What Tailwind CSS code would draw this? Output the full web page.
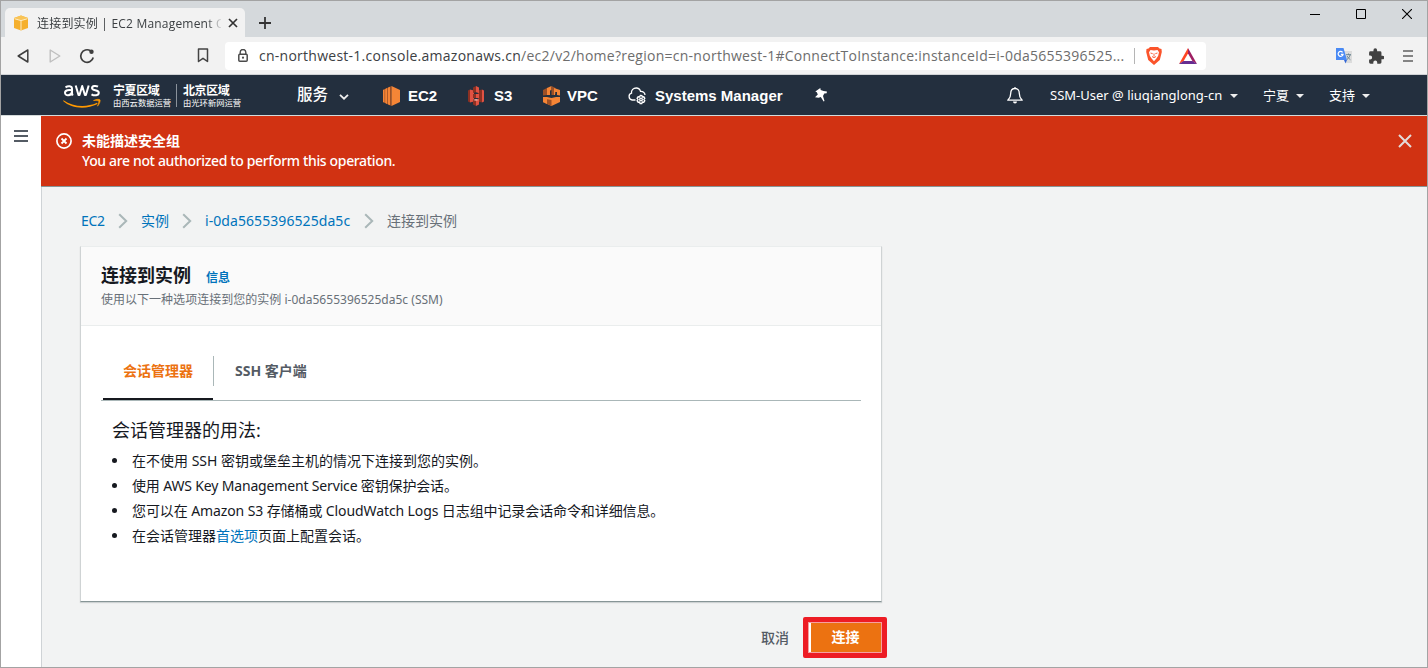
<!DOCTYPE html>
<html lang="zh-CN">
<head>
<meta charset="utf-8">
<title>连接到实例 | EC2 Management Console</title>
<script src="https://cdn.jsdelivr.net/npm/@tailwindcss/browser@4"></script>
</head>
<body class="w-[1428px] h-[668px] overflow-hidden whitespace-nowrap bg-[#f2f3f3] font-['Noto_Sans','Noto_Sans_CJK_SC',sans-serif] text-[14px]">
<div class="flex h-[668px] w-[1428px] flex-col border border-[#a3a3a3]">

  <!-- tab strip -->
  <div class="flex h-9 shrink-0 bg-[#d5d9dc] pl-1 pt-[7px] text-[#3c4043]">
    <div class="flex h-[29px] w-[240px] shrink-0 items-center rounded-t-[5px] bg-[#f2f2f2] pl-2">
      <svg class="size-4 shrink-0" viewBox="0 0 16 16"><path d="M1 3 8 .5 15 3v10l-7 2.500L1 13z" fill="#f5b02e"/><path d="M1 3 8 .5 15 3 8 5.200z" fill="#f9c456"/><path d="M1.500 3.700 8 5.600l6.500-1.900M8 5.600V15" stroke="#fff3d5" stroke-width=".9" fill="none"/></svg>
      <span class="ml-2 mt-[2px] w-[184px] shrink-0 overflow-hidden font-['Open_Sans','Noto_Sans_CJK_SC',sans-serif] text-[12px] leading-5 tracking-[0.2px] [mask-image:linear-gradient(to_right,black_170px,transparent_186px)]">连接到实例 | EC2 Management C</span>
      <svg class="ml-[7px] size-[10px] shrink-0" viewBox="0 0 10 10"><path d="m1 1 8 8m0-8-8 8" stroke="#333" stroke-width="1.700"/></svg>
    </div>
    <svg class="ml-[14px] mt-[9px] size-3 shrink-0" viewBox="0 0 12 12"><path d="M6 0v12M0 6h12" stroke="#333" stroke-width="1.800"/></svg>
    <div class="ml-auto mt-[1px] flex pr-[15px]">
      <svg class="h-[11px] w-[10px]" viewBox="0 0 10 11"><path d="M0 5.500h10" stroke="#000"/></svg>
      <svg class="ml-9 h-[10px] w-[10px]" viewBox="0 0 10 10"><path d="M.5.5h9v9h-9z" fill="none" stroke="#000"/></svg>
      <svg class="ml-9 h-[10px] w-[10px]" viewBox="0 0 10 10"><path d="m0 0 10 10M10 0 0 10" stroke="#000" stroke-width="1.100"/></svg>
    </div>
  </div>

  <!-- address bar -->
  <div class="flex h-[38px] shrink-0 items-center border-b border-[#d0d2d5] bg-[#f2f2f2] pl-4">
    <svg class="h-[14px] w-3" viewBox="0 0 12 14"><path d="M10.800 1v12L1.200 7z" fill="none" stroke="#3f3f3f" stroke-width="1.500" stroke-linejoin="round"/></svg>
    <svg class="ml-5 h-[14px] w-3" viewBox="0 0 12 14"><path d="M1.200 1v12l9.600-6z" fill="none" stroke="#bfbfbf" stroke-width="1.400" stroke-linejoin="round"/></svg>
    <svg class="ml-[18px] size-4" viewBox="0 0 16 16"><path d="M14.200 9.500A6.300 6.300 0 1 1 11.500 2.800" fill="none" stroke="#3f3f3f" stroke-width="1.700"/><circle cx="12.500" cy="3.800" r="2.200" fill="#3f3f3f"/></svg>
    <svg class="ml-[102px] h-[15px] w-3" viewBox="0 0 12 15"><path d="M1.500 1h9v12.500L6 10.300l-4.500 3.200z" fill="none" stroke="#444" stroke-width="1.500" stroke-linejoin="round"/></svg>
    <div class="ml-4 flex h-7 w-[981px] shrink-0 items-center rounded bg-white pl-[13px]">
      <svg class="h-[13px] w-[10px] shrink-0" viewBox="0 0 10 13"><path d="M2.200 5V3.300a2.800 2.800 0 0 1 5.600 0V5" fill="none" stroke="#4b4b4b" stroke-width="1.400"/><rect x=".8" y="5.200" width="8.400" height="7" rx="1" fill="none" stroke="#4b4b4b" stroke-width="1.500"/><circle cx="5" cy="8.700" r="1.100" fill="#4b4b4b"/></svg>
      <span class="ml-[11px] w-[875px] shrink-0 font-['Open_Sans',sans-serif] text-[14px] leading-5 tracking-[0.26px] text-[#6d6d6d]"><span class="text-[#3c4043]">cn-northwest-1.console.amazonaws.cn</span>/ec2/v2/home?region=cn-northwest-1#ConnectToInstance:instanceId=i-0da5655396525...</span>
      <span class="h-4 w-px bg-[#b5b5b5]"></span>
      <svg class="ml-[11px] h-[18px] w-4 shrink-0" viewBox="0 0 16 18"><path d="M4 0h8l1.500 1.500L15.500 2l.3 3-2 8L8 18l-5.800-5L.2 5l.3-3 2-.5z" fill="#fb542b"/><path d="M4.500 3 8 3.500l3.500-.5L13 5.300l-.8 3.500-1.800 2.700L8 14.200l-2.400-2.700-1.800-2.700L3 5.300z" fill="#fff"/><path d="m4.500 6 2.200.7M11.500 6l-2.200.7M8 6.500v3M6 9.500l2 1.200 2-1.200" stroke="#fb542b" stroke-width=".9" fill="none"/></svg>
      <svg class="ml-[17px] h-4 w-[18px] shrink-0" viewBox="0 0 18 16"><path d="M9 0 0 16l4.500-2.800L9 5.500z" fill="#ff4724"/><path d="m9 0 9 16-4.500-2.800L9 5.500z" fill="#9e1f63"/><path d="M0 16h18l-4.500-3h-9z" fill="#662d91"/></svg>
    </div>
    <svg class="ml-[130px] h-[17px] w-4 shrink-0" viewBox="0 0 16 17"><path d="M7 4h9v12H10z" fill="#dcdcdc"/><path d="M0 1h7.500L11 13H0z" fill="#4a8af4"/><path d="M8 13h3l-1.500 3.500z" fill="#3367d6"/><path d="M6.600 5.300a2.500 2.500 0 1 0 .5 2H4.900" fill="none" stroke="#fff" stroke-width="1.200"/><path d="M10 7.700h5M12.500 6.500v1.200m1.700 0c-.4 2-2 4-3.200 4.800m0-3.500c.8 1.500 2 2.700 3.400 3.700" fill="none" stroke="#607d8b" stroke-width=".9"/></svg>
    <svg class="ml-4 h-4 w-4 shrink-0" viewBox="0 0 22 22"><path d="M20 10.500h-1.500v-4a2 2 0 0 0-2-2h-4V3a2.500 2.500 0 0 0-5 0v1.500h-4a2 2 0 0 0-2 2v3.800H3a2.700 2.700 0 0 1 0 5.400H1.500v3.800a2 2 0 0 0 2 2h3.800V20a2.700 2.700 0 0 1 5.400 0v1.500h3.800a2 2 0 0 0 2-2v-4H20a2.500 2.500 0 0 0 0-5z" fill="#424242"/></svg>
    <svg class="ml-[19px] h-3 w-[10px] shrink-0" viewBox="0 0 10 12"><path d="M0 1h10M0 6h10M0 11h10" stroke="#606060" stroke-width="1.700"/></svg>
  </div>

  <!-- console navigation -->
  <div class="flex h-[41px] shrink-0 items-center border-b border-[#d5dbdb] bg-[#232f3e] pl-[62px] pt-[2px] text-white">
    <svg class="-mt-px h-6 w-[38px] shrink-0" viewBox="0 0 38 24"><g fill="none" stroke="#fff" stroke-width="2"><path d="M2.500 3.300C5 1.700 9 1.700 9 4.800v4c0 1.200.3 2 .8 2.700M9 6.300C6 5.500 2 6 2 8.800c0 3.600 6.500 3 7-.8"/><path d="m12.700 1.500 2.800 9.500h1L19.200 2l2.700 9h1l2.800-9.500" stroke-linejoin="round"/><path d="M35 2.700c-2-1.200-6-1-6 1.400 0 3 6.800 1.400 6.800 4.600 0 3-4.500 3.300-7.300 1.600"/></g><path d="M.5 16.200c9 6.600 23 7.600 33.500 2.600l.6 1.200c-11.500 5.800-26 4.800-34.500-3z" fill="#f90"/><path d="M30.500 16.500c3-1.600 6-1.300 6.500-.7.600.8-.4 4.200-2.500 6.400 1-2.600 1.600-4.600 1.200-5.100-.5-.6-2.500-.6-5.200-.6z" fill="#f90" stroke="#f90" stroke-width=".6"/></svg>
    <div class="ml-3 w-[63px] shrink-0 font-['Noto_Sans_CJK_SC',sans-serif]">
      <div class="text-[12px] font-bold leading-[13px] tracking-[-0.4px]">宁夏区域</div>
      <div class="text-[8.3px] leading-[13px]">由西云数据运营</div>
    </div>
    <span class="-mt-px h-[23px] w-px shrink-0 bg-[#8a929b]"></span>
    <div class="ml-[6px] w-[114px] shrink-0 font-['Noto_Sans_CJK_SC',sans-serif]">
      <div class="text-[12px] font-bold leading-[13px] tracking-[-0.4px]">北京区域</div>
      <div class="text-[8.3px] leading-[13px]">由光环新网运营</div>
    </div>
    <span class="-mt-[2px] w-[42px] shrink-0 text-[15.500px] font-medium">服务</span>
    <svg class="mt-[1px] h-[6px] w-[10px] shrink-0" viewBox="0 0 10 6"><path d="m1 .8 4 3.900L9 .8" fill="none" stroke="#eee" stroke-width="1.800"/></svg>
    <svg class="ml-[34px] h-5 w-[17px] shrink-0" viewBox="0 0 17 20"><path d="M0 4v12l8.500 4V0z" fill="#9d5025"/><path d="M0 4 1.500 3.300v13.400L0 16zM2.200 3l1.800-.9v15.800l-1.800-.9zM4.800 1.700 7 .7v18.600l-2.200-1z" fill="#f58536"/><path d="m8.500 0 8.500 4v12l-8.500 4z" fill="#f58536"/></svg>
    <span class="ml-2 w-[60px] shrink-0 font-['Liberation_Sans'] text-[15px] font-bold">EC2</span>
    <svg class="h-5 w-4 shrink-0" viewBox="0 0 16 20"><path d="M0 4.500 2 3.500v13l-2-1z" fill="#8c3123"/><path d="m14 3.500 2 1v11l-2 1z" fill="#e05243"/><path d="m2 3.500 4 1v11l-4 1z" fill="#e05243"/><path d="m14 3.500-4 1v11l4 1z" fill="#8c3123"/><path d="M8 0 5 1.500V7l3-.7zM5 13v5.500L8 20v-6.300z" fill="#8c3123"/><path d="m8 0 3 1.500V7l-3-.7zM11 13v5.500L8 20v-6.300z" fill="#e05243"/><path d="M5 8h3v4H5z" fill="#8c3123"/><path d="M8 8h3v4H8z" fill="#e05243"/><path d="m5 14 3-1 3 1-3 .7z" fill="#f2b0a9"/></svg>
    <span class="ml-[10px] w-[49px] shrink-0 font-['Liberation_Sans'] text-[15px] font-bold">S3</span>
    <svg class="h-5 w-[17px] shrink-0" viewBox="0 0 17 20"><path d="m0 4 4-2v7l-4 .5z" fill="#9d5025"/><path d="m4 2 4.500-2v4L7 4.500V9H4z" fill="#f58536"/><path d="m8.500 0 4 2v6L11 9H8.500z" fill="#9d5025"/><path d="m11 2 6 2v5.500L14 9V6h-2v3h-1z" fill="#f58536"/><path d="M0 11h4l4.500 1 4.500-1h4v5l-8.500 4L0 16z" fill="#f58536"/><path d="M0 12.500 8.500 14v6L0 16z" fill="#9d5025"/><path d="M0 12h4v6l-4-2z" fill="#f58536"/></svg>
    <span class="ml-[7px] w-[61px] shrink-0 font-['Liberation_Sans'] text-[15px] font-bold">VPC</span>
    <svg class="h-[18px] w-[18px] shrink-0" viewBox="0 0 18 18" fill="none" stroke="#fff" stroke-width="1.300"><path d="M7.500 13H4.200a3.500 3.500 0 0 1-.7-6.800C3 3 5.500 1 8.200 1c2.300 0 3.800 1.300 4.300 3.300 2.300-.2 4.500 1.400 4.500 3.700"/><path d="m12.300 8.500 1.600.1.500 1.400 1.400-.2 1 1.500-.9 1.200.9 1.300-1 1.400-1.400-.2-.6 1.500h-1.700l-.6-1.500-1.400.2-1-1.400.9-1.300-.9-1.200 1-1.500 1.400.2z"/><circle cx="13" cy="12.500" r="1.300"/></svg>
    <span class="ml-[9px] w-[160px] shrink-0 font-['Liberation_Sans'] text-[15px] font-bold">Systems Manager</span>
    <svg class="-mt-[2px] h-[14px] w-3 shrink-0" viewBox="0 0 12 14"><path d="M5.300 0 .3 3.400l1.500.8 1 2.300L0 9.300l3.600.5L5.800 9l2.800 4.500.9-.6L8 8l1.300-2.500 2.400-.3.200-1.700L8.500 3 5.700 2z" fill="#fff"/></svg>
    <svg class="-mt-[2px] ml-[180px] h-[18px] w-4 shrink-0" viewBox="0 0 16 18"><path d="M8 1v1.500m0 0c-3 0-4.300 2.200-4.300 5 0 4-1 4.700-2.900 6.700h14.400c-1.900-2-2.900-2.700-2.900-6.700 0-2.800-1.300-5-4.300-5z" fill="none" stroke="#fff" stroke-width="1.300" stroke-linejoin="round"/><path d="M6 15.500h4a2 2 0 0 1-4 0z" fill="#fff"/></svg>
    <span class="ml-[27px] w-[180px] shrink-0 text-[13px]">SSM-User @ liuqianglong-cn</span>
    <svg class="h-1 w-2 shrink-0" viewBox="0 0 8 4"><path d="M0 0h8L4 4z" fill="#eee"/></svg>
    <span class="ml-[25px] w-[33px] shrink-0 text-[13px]">宁夏</span>
    <svg class="h-1 w-2 shrink-0" viewBox="0 0 8 4"><path d="M0 0h8L4 4z" fill="#eee"/></svg>
    <span class="ml-[25px] w-[33px] shrink-0 text-[13px]">支持</span>
    <svg class="h-1 w-2 shrink-0" viewBox="0 0 8 4"><path d="M0 0h8L4 4z" fill="#eee"/></svg>
  </div>

  <div class="flex min-h-0 flex-1">
    <aside class="w-10 shrink-0 bg-white pl-[13px] pt-[14px]">
      <svg class="h-3 w-[14px]" viewBox="0 0 14 12"><path d="M0 1h14M0 6h14M0 11h14" stroke="#545b64" stroke-width="2"/></svg>
    </aside>
    <main class="min-w-0 flex-1 border-l border-[#cfd3d6] bg-[#f2f3f3]">
      <div class="-ml-px flex h-[71px] items-start border-b border-[#879596] bg-[#d13212] text-white">
        <svg class="ml-[15px] mt-[17px] size-4 shrink-0" viewBox="0 0 16 16" fill="none" stroke="#fff"><circle cx="8" cy="8" r="7.100" stroke-width="1.700"/><path d="m5.500 5.500 5 5m0-5-5 5" stroke-width="1.800"/></svg>
        <div class="ml-[10px] mt-[15px] text-[14px] leading-5">
          <div class="font-bold">未能描述安全组</div>
          <div class="font-medium tracking-[-0.35px]">You are not authorized to perform this operation.</div>
        </div>
        <svg class="ml-auto mr-[15px] mt-[18px] size-[14px] shrink-0" viewBox="0 0 14 14"><path d="m1 1 12 12m0-12L1 13" stroke="#e3dcda" stroke-width="2"/></svg>
      </div>

      <nav class="ml-[39px] mt-6 flex h-5 items-center text-[14px] leading-5 text-[#0073bb]">
        <span class="w-[37px] tracking-[-0.3px]">EC2</span>
        <svg class="h-4 w-[10px]" viewBox="0 0 10 16"><path d="m1.200 1.200 7 6.800-7 6.800" fill="none" stroke="#aab7b8" stroke-width="2"/></svg>
        <span class="ml-[13px] w-[41px]">实例</span>
        <svg class="h-4 w-[10px]" viewBox="0 0 10 16"><path d="m1.200 1.200 7 6.800-7 6.800" fill="none" stroke="#aab7b8" stroke-width="2"/></svg>
        <span class="ml-[13px] w-[159px] tracking-[0.070px]">i-0da5655396525da5c</span>
        <svg class="h-4 w-[10px]" viewBox="0 0 10 16"><path d="m1.200 1.200 7 6.800-7 6.800" fill="none" stroke="#aab7b8" stroke-width="2"/></svg>
        <span class="ml-[13px] text-[#687078]">连接到实例</span>
      </nav>

      <section class="ml-[38px] mt-[15px] h-[356px] w-[802px] border border-b-[#879596] border-l-[#cfd3d4] border-r-[#cfd3d4] border-t-[#eaeded] bg-white shadow-[0_1px_1px_rgba(0,28,36,0.15)]">
        <header class="h-[79px] border-b border-[#eaeded] bg-[#fafafa] pl-5 pt-4">
          <div class="flex items-baseline leading-6">
            <h1 class="w-[105px] text-[18px] font-bold text-[#16191f]">连接到实例</h1>
            <span class="text-[12px] font-bold text-[#0073bb]">信息</span>
          </div>
          <p class="text-[12px] leading-[20px] tracking-[0.020px] text-[#687078]">使用以下一种选项连接到您的实例 i-0da5655396525da5c (SSM)</p>
        </header>
        <div class="mx-5 flex h-[75px] items-end border-b border-[#aab7b8] pl-[2px] text-[14px] font-bold">
          <div class="h-[60px] w-[110px] border-b-2 border-[#16191f] pl-5 pt-[21px] leading-[20px] text-[#ec7211]">会话管理器</div>
          <span class="mb-[14px] h-[30px] w-px bg-[#aab7b8]"></span>
          <div class="h-[60px] pl-[21px] pt-[21px] leading-[20px] text-[#545b64]">SSH 客户端</div>
        </div>
        <div class="ml-[31px] mt-4 text-[#16191f]">
          <h2 class="text-[18px] leading-[27px]">会话管理器的用法:</h2>
          <ul class="mt-1 text-[14px] leading-[25px]">
            <li class="flex items-center"><span class="mr-[15px] size-[5px] rounded-full bg-[#16191f]"></span><span>在不使用 SSH 密钥或堡垒主机的情况下连接到您的实例。</span></li>
            <li class="flex items-center"><span class="mr-[15px] size-[5px] rounded-full bg-[#16191f]"></span><span class="tracking-[-0.16px]">使用 AWS Key Management Service 密钥保护会话。</span></li>
            <li class="flex items-center"><span class="mr-[15px] size-[5px] rounded-full bg-[#16191f]"></span><span class="tracking-[-0.1px]">您可以在 Amazon S3 存储桶或 CloudWatch Logs 日志组中记录会话命令和详细信息。</span></li>
            <li class="flex items-center"><span class="mr-[15px] size-[5px] rounded-full bg-[#16191f]"></span><span>在会话管理器<span class="text-[#0073bb]">首选项</span>页面上配置会话。</span></li>
          </ul>
        </div>
      </section>

      <div class="ml-[719px] mt-[15px] flex items-center text-[14px] font-bold">
        <span class="w-[42px] font-medium text-[#545b64]">取消</span>
        <div class="h-[41px] w-[84px] rounded-[2px] border-[5px] border-[#ed1c24] bg-[#f6a0a0] p-px">
          <div class="h-full border-l-2 border-white bg-[#ec7211] pr-px text-center leading-7 text-white">连接</div>
        </div>
      </div>
    </main>
  </div>
</div>
</body>
</html>
